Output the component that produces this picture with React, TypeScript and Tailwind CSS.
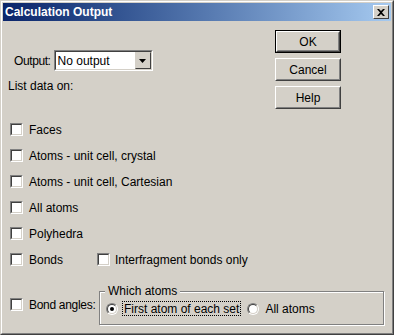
import React from 'react';

const font = { fontFamily: '"Liberation Sans", Arial, sans-serif' };

function CheckBox() {
  return (
    <span className="inline-block w-[13px] h-[13px] shrink-0 border border-t-[#808080] border-l-[#808080] border-b-white border-r-white">
      <span className="block w-full h-full bg-white border border-t-[#404040] border-l-[#404040] border-b-[#d4d0c8] border-r-[#d4d0c8]" />
    </span>
  );
}

function Radio({ checked }: { checked?: boolean }) {
  return (
    <span className="inline-flex w-[12px] h-[12px] shrink-0 rounded-full border border-t-[#808080] border-l-[#808080] border-b-white border-r-white">
      <span className="flex items-center justify-center w-full h-full rounded-full bg-white border border-t-[#404040] border-l-[#404040] border-b-[#d4d0c8] border-r-[#d4d0c8]">
        {checked && <span className="block w-[4px] h-[4px] rounded-full bg-black" />}
      </span>
    </span>
  );
}

function Button({ label, isDefault }: { label: string; isDefault?: boolean }) {
  return (
    <div className={`w-[66px] h-[23px] ${isDefault ? 'border border-black' : ''}`}>
      <div className="w-full h-full border border-t-white border-l-white border-b-[#404040] border-r-[#404040]">
        <div className="w-full h-full flex items-center justify-center text-[12px] text-black border border-t-[#d4d0c8] border-l-[#d4d0c8] border-b-[#808080] border-r-[#808080]">
          {label}
        </div>
      </div>
    </div>
  );
}

function Row({ label, children }: { label: string; children?: React.ReactNode }) {
  return (
    <div className="flex items-center h-[13px]">
      <CheckBox />
      <span className="ml-[6px] w-[68px] whitespace-nowrap">{label}</span>
      {children}
    </div>
  );
}

export default function App() {
  return (
    <div style={font} className="w-[394px] h-[335px] bg-[#d4d0c8] text-[12px] text-black leading-none select-none">
      <div className="w-full h-full border border-t-[#d4d0c8] border-l-[#d4d0c8] border-b-[#404040] border-r-[#404040]">
        <div className="w-full h-full border border-t-white border-l-white border-b-[#808080] border-r-[#808080] p-[1px] flex flex-col">
          {/* title bar */}
          <div className="h-[18px] flex items-center justify-between bg-gradient-to-r from-[#0a246a] to-[#a6caf0] pl-[2px] pr-[2px]">
            <span className="text-white font-bold text-[12px]">Calculation Output</span>
            <div className="w-[16px] h-[14px] bg-[#d4d0c8] border border-t-white border-l-white border-b-[#404040] border-r-[#404040] flex items-center justify-center">
              <svg width="8" height="7" viewBox="0 0 8 7">
                <path d="M0 0h2l2 2 2-2h2L5 3.5 8 7H6L4 5 2 7H0l3-3.5z" fill="#000" />
              </svg>
            </div>
          </div>

          {/* top area */}
          <div className="flex pl-[5px] pr-[50px]">
            <div className="flex-1 pt-[29px]">
              <div className="flex items-center ml-[6px]">
                <span className="tracking-[-0.4px]">Output:</span>
                <div className="ml-[3px] w-[99px] h-[21px] border border-t-[#808080] border-l-[#808080] border-b-white border-r-white">
                  <div className="w-full h-full bg-white flex items-center border border-t-[#404040] border-l-[#404040] border-b-[#d4d0c8] border-r-[#d4d0c8]">
                    <span className="flex-1 pl-[2px]">No output</span>
                    <div className="w-[16px] h-[17px] bg-[#d4d0c8] flex items-center justify-center border border-t-[#d4d0c8] border-l-[#d4d0c8] border-b-[#404040] border-r-[#404040]">
                      <svg width="7" height="4" viewBox="0 0 7 4">
                        <path d="M0 0h7L3.5 4z" fill="#000" />
                      </svg>
                    </div>
                  </div>
                </div>
              </div>
              <div className="mt-[9px]">List data on:</div>
            </div>
            <div className="flex flex-col gap-[5px] pt-[9px]">
              <Button label="OK" isDefault />
              <Button label="Cancel" />
              <Button label="Help" />
            </div>
          </div>

          {/* checkbox rows */}
          <div className="flex flex-col gap-[13px] pl-[7px] mt-[14px]">
            <Row label="Faces" />
            <Row label="Atoms - unit cell, crystal" />
            <Row label="Atoms - unit cell, Cartesian" />
            <Row label="All atoms" />
            <Row label="Polyhedra" />
            <Row label="Bonds">
              <CheckBox />
              <span className="ml-[5px] whitespace-nowrap">Interfragment bonds only</span>
            </Row>
          </div>

          {/* bond angles */}
          <div className="flex items-start pl-[7px] mt-[25px]">
            <span className="mt-[7px] flex items-center">
              <CheckBox />
              <span className="ml-[6px] w-[70px] whitespace-nowrap tracking-[-0.3px]">Bond angles:</span>
            </span>
            <div className="relative w-[285px] h-[34px] border border-[#808080] shadow-[1px_1px_0_#fff,inset_1px_1px_0_#fff]">
              <span className="absolute -top-[7px] left-[5px] px-[3px] bg-[#d4d0c8]">Which atoms</span>
              <div className="flex items-center h-full pl-[6px] pt-[1px]">
                <Radio checked />
                <span className="ml-[4px] h-[15px] px-[1px] flex items-center border border-dotted border-black">First atom of each set</span>
                <span className="ml-[6px] flex"><Radio /></span>
                <span className="ml-[6px]">All atoms</span>
              </div>
            </div>
          </div>
        </div>
      </div>
    </div>
  );
}
